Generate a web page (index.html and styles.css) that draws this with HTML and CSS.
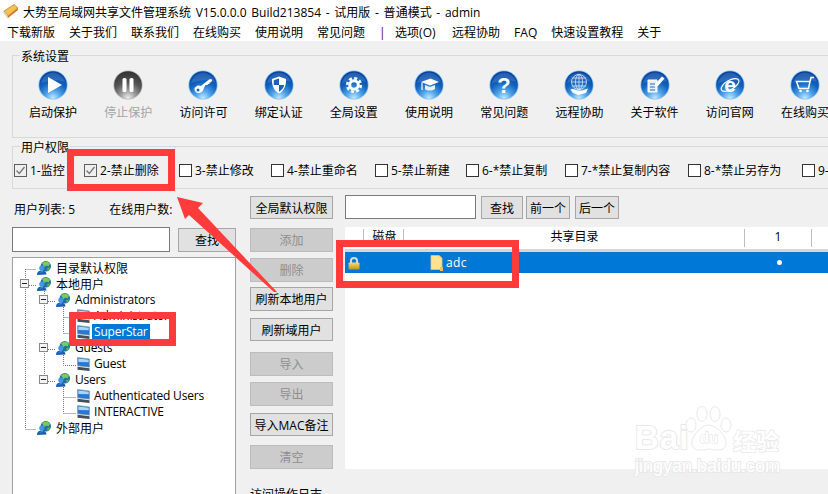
FILE: index.html
```html
<!DOCTYPE html>
<html lang="zh-CN">
<head>
<meta charset="utf-8">
<title>大势至局域网共享文件管理系统</title>
<link rel="stylesheet" href="styles.css">
</head>
<body>
<svg class="defs" width="0" height="0" aria-hidden="true">
  <defs>
    <radialGradient id="blue" cx=".5" cy=".98" r=".95">
      <stop offset="0" stop-color="#c4eaff"/><stop offset=".3" stop-color="#4fa3e8"/><stop offset=".62" stop-color="#1262bd"/><stop offset="1" stop-color="#05409c"/>
    </radialGradient>
    <radialGradient id="grey" cx=".5" cy=".98" r=".95">
      <stop offset="0" stop-color="#f0f0f0"/><stop offset=".3" stop-color="#9c9c9c"/><stop offset=".62" stop-color="#555"/><stop offset="1" stop-color="#333"/>
    </radialGradient>
    <linearGradient id="lock" x1="0" y1="0" x2="0" y2="1"><stop offset="0" stop-color="#f7dc6a"/><stop offset="1" stop-color="#c8960f"/></linearGradient>
    <symbol id="ball" viewBox="0 0 30 30">
      <circle cx="15" cy="15" r="14.6" fill="#7cc0f2"/>
      <circle cx="15" cy="15" r="13.8" fill="url(#blue)"/>
      <path d="M3 13C5 6 10 2.500 15 2.500S26 7 27 12C20 9 10 10 3 13Z" fill="#fff" opacity=".13"/>
    </symbol>
    <symbol id="ballg" viewBox="0 0 30 30">
      <circle cx="15" cy="15" r="14.6" fill="#b5b5b5"/>
      <circle cx="15" cy="15" r="13.8" fill="url(#grey)"/>
    </symbol>
    <symbol id="net" viewBox="0 0 14 14">
      <circle cx="8.800" cy="5.200" r="5.200" fill="#1f6fa8"/>
      <path d="M5 2.500C7 .2 11 .2 13 2.800L11.500 5.500L9.500 4.500L7.500 6Z" fill="#7cc95a"/>
      <path d="M10 7L13 6.500C13 8.500 11.500 9.800 10.500 10Z" fill="#5fb04a"/>
      <circle cx="4.800" cy="7" r="2.600" fill="#3f97e8"/>
      <path d="M0 14C0 10.500 2.300 9.500 4.800 9.500S9.500 10.800 9.500 13.500Z" fill="#1a5cb4"/>
      <path d="M2 11.500L5 10.300L6.500 11Z" fill="#6db6f0"/>
    </symbol>
    <symbol id="pc" viewBox="0 0 13 14">
      <path d="M.5 .5L12.500 2V10.200L.5 8.800Z" fill="#2579d2" stroke="#8b9cb0" stroke-width=".7"/>
      <path d="M1.400 1.500L11.700 2.800V5.300L1.400 5Z" fill="#a9d6f6"/>
      <path d="M.5 9.800L12.500 11.200V14L.5 12.800Z" fill="#454f5c"/>
    </symbol>
  </defs>
</svg>

<div class="app">
  <header class="titlebar">
    <svg class="app-ic" viewBox="0 0 16 16"><path d="M1 8L11 1.500L15 5L5 13Z" fill="#f4c04e" stroke="#b87a1f" stroke-width=".7"/><path d="M1 8L5 13V15L1 10Z" fill="#e8e4d8" stroke="#b8a27a" stroke-width=".5"/><path d="M5 13L15 5V7L5 15Z" fill="#d96f2a"/></svg>
    <span class="title-text">大势至局域网共享文件管理系统 V15.0.0.0 Build213854 - 试用版 - 普通模式 - admin</span>
  </header>
  <nav class="menu">
    <span>下载新版</span><span>关于我们</span><span>联系我们</span><span>在线购买</span><span>使用说明</span><span>常见问题</span><span class="menu-sep">|</span><span class="menu-opt">选项(O)</span><span>远程协助</span><span>FAQ</span><span>快速设置教程</span><span>关于</span>
  </nav>

  <main class="content">
    <fieldset class="group group-sys">
      <legend>系统设置</legend>
      <div class="tools">
        <div class="tool"><svg class="tool-ic" viewBox="0 0 30 30"><use href="#ball"/><path d="M10 7L24 15L10 23Z" fill="#fff"/></svg><span>启动保护</span></div>
        <div class="tool tool-off"><svg class="tool-ic" viewBox="0 0 30 30"><use href="#ballg"/><rect x="9.500" y="8" width="4" height="14" rx="1.500" fill="#fff"/><rect x="16.500" y="8" width="4" height="14" rx="1.500" fill="#fff"/></svg><span>停止保护</span></div>
        <div class="tool"><svg class="tool-ic" viewBox="0 0 30 30"><use href="#ball"/><path d="M7 17.500C9 15 11.500 15 13 16L21 9.500L23.500 9L24 11L22.500 12.500L21.500 12.500V14H20L19.500 15H17.500L15.500 19C15.500 22 11 24 8.500 22.500C6.500 21 6 19 7 17.500Z" fill="#fff"/><circle cx="10" cy="20" r="1.500" fill="#1a66be"/></svg><span>访问许可</span></div>
        <div class="tool"><svg class="tool-ic" viewBox="0 0 30 30"><use href="#ball"/><path d="M15 6.500L22 9C22.500 15 20 21 15 23.500C10 21 7.500 15 8 9Z" fill="#fff"/><path d="M15 8.500V15H9.800C9.700 13 9.700 11.500 9.800 10.200ZM15 15H20.200C19.500 18 17.500 20.500 15 21.800Z" fill="#1a62b8"/></svg><span>绑定认证</span></div>
        <div class="tool"><svg class="tool-ic" viewBox="0 0 30 30"><use href="#ball"/><circle cx="15" cy="15" r="6.800" fill="none" stroke="#fff" stroke-width="2.600" stroke-dasharray="3 2.340"/><circle cx="15" cy="15" r="4.300" fill="none" stroke="#fff" stroke-width="3"/></svg><span>全局设置</span></div>
        <div class="tool"><svg class="tool-ic" viewBox="0 0 30 30"><use href="#ball"/><path d="M7 12L16.500 8.500L25 12L16 15.500Z" fill="#fff"/><path d="M11 15L16 17L21 15V19C18 21 13 21 11 19Z" fill="#e8f2fb"/><path d="M8 12.500V20" stroke="#fff" stroke-width="1.200"/></svg><span>使用说明</span></div>
        <div class="tool"><svg class="tool-ic" viewBox="0 0 30 30"><use href="#ball"/><text class="q" x="15" y="22.500" text-anchor="middle">?</text></svg><span>常见问题</span></div>
        <div class="tool"><svg class="tool-ic" viewBox="0 0 30 30"><use href="#ball"/><g fill="none" stroke="#dbe9f6" stroke-width=".8"><circle cx="15" cy="12" r="7.500"/><ellipse cx="15" cy="12" rx="3.500" ry="7.500"/><path d="M7.500 12H22.500M8.500 8H21.500M8.500 16H21.500M15 4.500V19.500"/></g><path d="M6.500 19.500C9 18 12 20 14 20.500H18L24 18.500L22 23L14 25L8.500 22.500Z" fill="#fff"/></svg><span>远程协助</span></div>
        <div class="tool"><svg class="tool-ic" viewBox="0 0 30 30"><use href="#ball"/><path d="M8 10H17V22H8Z" fill="#e6eef7" stroke="#fff"/><path d="M10 14H15M10 17H15M10 20H15" stroke="#2269bc"/><path d="M15 14L22 6.500L24.500 8.500L18 16L14.500 17Z" fill="#fff"/></svg><span>关于软件</span></div>
        <div class="tool"><svg class="tool-ic" viewBox="0 0 30 30"><use href="#ball"/><text class="e" x="15" y="22" text-anchor="middle">e</text><ellipse cx="15" cy="15" rx="10" ry="4.500" transform="rotate(-30 15 15)" fill="none" stroke="#fff" stroke-width="1.200"/></svg><span>访问官网</span></div>
        <div class="tool"><svg class="tool-ic" viewBox="0 0 30 30"><use href="#ball"/><path d="M6.500 11.500H20L18.500 18.500H9ZM20 11.500L21 7.500H24" fill="none" stroke="#fff" stroke-width="1.500"/><circle cx="10.500" cy="21" r="1.300" fill="#fff"/><circle cx="17.500" cy="21" r="1.300" fill="#fff"/></svg><span>在线购买</span></div>
      </div>
    </fieldset>

    <fieldset class="group group-perm">
      <legend>用户权限</legend>
      <div class="perms">
        <label class="perm"><span class="check is-on"><svg viewBox="0 0 11 11"><path d="M1.500 5.500L4.300 8.500L9.500 2" fill="none" stroke="#777" stroke-width="1.300"/></svg></span><span class="perm-text">1-监控</span></label>
        <label class="perm"><span class="check is-on"><svg viewBox="0 0 11 11"><path d="M1.500 5.500L4.300 8.500L9.500 2" fill="none" stroke="#777" stroke-width="1.300"/></svg></span><span class="perm-text">2-禁止删除</span></label>
        <label class="perm"><span class="check"></span><span class="perm-text">3-禁止修改</span></label>
        <label class="perm"><span class="check"></span><span class="perm-text">4-禁止重命名</span></label>
        <label class="perm"><span class="check"></span><span class="perm-text">5-禁止新建</span></label>
        <label class="perm"><span class="check"></span><span class="perm-text">6-*禁止复制</span></label>
        <label class="perm"><span class="check"></span><span class="perm-text">7-*禁止复制内容</span></label>
        <label class="perm"><span class="check"></span><span class="perm-text">8-*禁止另存为</span></label>
        <label class="perm"><span class="check"></span><span class="perm-text">9-*禁止打印</span></label>
      </div>
    </fieldset>

    <div class="lower">
      <section class="col-left">
        <div class="stats"><span>用户列表: 5</span><span>在线用户数:</span></div>
        <div class="find"><div class="input input-user"></div><button class="btn btn-find">查找</button></div>
        <div class="tree">
          <svg class="tree-lines" viewBox="0 0 224 240" width="224" height="240">
            <g fill="none" stroke="#777" stroke-dasharray="1 1">
              <path d="M12.500 11V171M12.500 11.500H23M16 27.500H23M12.500 171.500H23"/>
              <path d="M31.500 31V123M35 43.500H42M35 91.500H42M35 123.500H42"/>
              <path d="M50.500 47V75.500M50.500 59.500H63M50.500 75.500H63M50.500 95V107.500H63M50.500 127V155.500M50.500 139.500H63M50.500 155.500H63"/>
            </g>
          </svg>
          <div class="node n1"><svg class="ic-net"><use href="#net"/></svg><span>目录默认权限</span></div>
          <div class="node n1"><i class="exp e1"></i><svg class="ic-net"><use href="#net"/></svg><span>本地用户</span></div>
          <div class="node n2"><i class="exp e2"></i><svg class="ic-net"><use href="#net"/></svg><span>Administrators</span></div>
          <div class="node n3"><svg class="ic-pc"><use href="#pc"/></svg><span>Administrator</span></div>
          <div class="node n3"><svg class="ic-pc"><use href="#pc"/></svg><span class="sel">SuperStar</span></div>
          <div class="node n2"><i class="exp e2"></i><svg class="ic-net"><use href="#net"/></svg><span>Guests</span></div>
          <div class="node n3"><svg class="ic-pc"><use href="#pc"/></svg><span>Guest</span></div>
          <div class="node n2"><i class="exp e2"></i><svg class="ic-net"><use href="#net"/></svg><span>Users</span></div>
          <div class="node n3"><svg class="ic-pc"><use href="#pc"/></svg><span>Authenticated Users</span></div>
          <div class="node n3"><svg class="ic-pc"><use href="#pc"/></svg><span>INTERACTIVE</span></div>
          <div class="node n1"><svg class="ic-net"><use href="#net"/></svg><span>外部用户</span></div>
        </div>
      </section>

      <section class="col-mid">
        <button class="btn h23 after9">全局默认权限</button>
        <button class="btn h24 after6" disabled>添加</button>
        <button class="btn h24 after5" disabled>删除</button>
        <button class="btn h24 after7">刷新本地用户</button>
        <button class="btn h23 after11">刷新域用户</button>
        <button class="btn h24 after6" disabled>导入</button>
        <button class="btn h24 after7" disabled>导出</button>
        <button class="btn h23 after9">导入MAC备注</button>
        <button class="btn h24 after18" disabled>清空</button>
        <div class="log-title">访问操作日志</div>
      </section>

      <section class="col-right">
        <div class="search">
          <div class="input input-dir"></div>
          <button class="btn h23 w42">查找</button>
          <button class="btn h23 w44">前一个</button>
          <button class="btn h23 w44 next">后一个</button>
        </div>
        <div class="list">
          <div class="list-head">
            <span class="hc hc-a"></span><span class="hc hc-b">磁盘</span><span class="hc hc-c">共享目录</span><span class="hc hc-d">1</span><span class="hc hc-e"></span>
          </div>
          <div class="list-row">
            <span class="cell-lock"><svg class="ic-lock" viewBox="0 0 12 14"><path d="M3 7V4.500C3 1 9 1 9 4.500V7" fill="none" stroke="#d9d9d9" stroke-width="2"/><rect x=".5" y="6.500" width="11" height="7" rx="1" fill="url(#lock)"/></svg></span>
            <span class="cell-name"><svg class="ic-folder" viewBox="0 0 13 16"><path d="M1 .5H9L12 3V14.500H1Z" fill="#fde28f" stroke="#e8c468" stroke-width=".8"/><path d="M10 12H13V16H10Z" fill="#e9c25a"/></svg>adc</span>
            <span class="cell-dot"><i class="dot"></i></span>
          </div>
        </div>
      </section>
    </div>
  </main>

  <div class="mark mark-perm"></div>
  <div class="mark mark-row"></div>
  <div class="mark mark-user"></div>
  <svg class="arrow" viewBox="0 0 110 105" width="110" height="105"><polygon points="2,2 28,8 23,13 102,97 99,97 14,20 10,24" fill="#ff3b3b"/></svg>

  <div class="watermark">
    <div class="wm-top">
      <span class="wm-bai">Bai</span>
      <svg class="wm-paw" viewBox="0 0 48 50" width="48" height="50"><g fill="#fff" stroke="#e9e9e9"><ellipse cx="6" cy="20" rx="5" ry="7"/><ellipse cx="17" cy="9" rx="5" ry="7.500"/><ellipse cx="30" cy="9" rx="5" ry="7.500"/><ellipse cx="41" cy="20" rx="5" ry="7"/><path d="M24 20C32 20 43 33 41 40C39 47 30 45 24 44C18 45 9 47 7 40C5 33 16 20 24 20Z"/></g><text class="wm-du" x="24" y="38" text-anchor="middle">du</text></svg>
      <span class="wm-cn">经验</span>
    </div>
    <div class="wm-url">jingyan.baidu.com</div>
  </div>
</div>
</body>
</html>
```
FILE: styles.css
```css
* { box-sizing: border-box; }
html, body { margin: 0; padding: 0; height: 494px; overflow: hidden; }
body { background: #f0f0f0; color: #000; font: 12px/16px "Open Sans", "Noto Sans CJK SC", sans-serif; }
.defs { position: absolute; }
.app { position: relative; width: 828px; height: 494px; overflow: hidden; }

.titlebar { height: 22px; background: #fff; display: flex; align-items: center; padding-left: 3px; gap: 4px; white-space: nowrap; }
.title-text { word-spacing: 1.600px; padding-top: 3px; }
.app-ic { width: 16px; height: 16px; flex: none; }
.menu { height: 19px; background: #fff; display: flex; gap: 14px; padding: 2px 0 0 7px; align-items: center; white-space: nowrap; }
.menu-sep { color: #500050; width: 2px; }
.menu-opt { width: 43px; }

.content { padding: 5px 0 0 12px; }
.group { margin: 0 -40px 0 0; padding: 0; border: 1px solid #d9d9d9; min-width: 0; }
.group legend { margin-left: 7px; padding: 3px 1px 0; line-height: 16px; }
.group-sys { height: 92px; }
.group-perm { height: 52px; margin-top: -1px; }

.tools { display: grid; grid-template-columns: repeat(11, 75.2px); padding: 5px 0 0 2.500px; }
.tool { display: flex; flex-direction: column; align-items: center; gap: 5px; white-space: nowrap; }
.tool-ic { width: 30px; height: 30px; display: block; }
.tool-off { color: #a5a5a5; }
.q { font: 900 22px "Liberation Sans", sans-serif; fill: #fff; }
.e { font: 700 21px "Liberation Sans", sans-serif; fill: #fff; }

.perms { display: grid; grid-template-columns: 70px 95px 92px 104px 91px 99px 123px 114px 80px; padding: 6px 0 0 1px; }
.perm { display: flex; align-items: center; gap: 3px; white-space: nowrap; height: 16px; }
.perm-text { height: 16px; padding-top: 1px; }
.check { width: 13px; height: 13px; flex: none; background: #fff; border: 1px solid #333; }
.check svg { display: block; width: 11px; height: 11px; }
.check.is-on { border-color: #5e5e5e; background: #f0f0f0; }

.lower { display: flex; margin-top: 6px; }
.col-left { width: 224px; flex: none; }
.stats { display: flex; height: 32px; padding: 7px 0 0 2px; gap: 34px; }
.find { display: flex; justify-content: space-between; height: 25px; margin-bottom: 5px; }
.input { background: #fff; border: 1px solid #7a7a7a; }
.input-user { width: 158px; height: 25px; }
.btn-find { width: 58px; height: 24px; margin-top: 1px; }
.tree { position: relative; height: 260px; background: #fff; border: 1px solid #a0a0a0; padding-top: 2px; }
.tree-lines { position: absolute; left: 0; top: 0; }
.node { position: relative; height: 16px; display: flex; align-items: center; white-space: nowrap; letter-spacing: -.2px; }
.n1 { padding-left: 24px; letter-spacing: 0; }
.n2 { padding-left: 43px; }
.n3 { padding-left: 64px; }
.ic-net { width: 14px; height: 14px; margin-right: 5px; flex: none; }
.ic-pc { width: 13px; height: 14px; margin-right: 2px; flex: none; }
.node span { padding: 0 2px; }
.n1 span { padding: 1px 0 0; height: 16px; }
.n2 span { padding: 0; }
.sel { background: #0078d7; color: #fff; height: 16px; }
.exp { position: absolute; top: 3px; width: 9px; height: 9px; background: #f4f4f4; border: 1px solid #888; }
.exp::after { content: ""; position: absolute; left: 1px; right: 1px; top: 3px; height: 1px; background: #222; }
.e1 { left: 7px; }
.e2 { left: 26px; }

.col-mid { width: 83px; flex: none; margin-left: 14px; padding-top: 1px; display: flex; flex-direction: column; }
.btn { display: block; padding: 2px 0 0; font: inherit; color: #000; background: #e1e1e1; border: 1px solid #a6a6a6; white-space: nowrap; flex: none; }
.btn:disabled { background: #cccccc; border-color: #bcbcbc; color: #8f8f8f; }
.h23 { height: 23px; }
.h24 { height: 24px; }
.after5 { margin-bottom: 5px; }
.after6 { margin-bottom: 6px; }
.after7 { margin-bottom: 7px; }
.after9 { margin-bottom: 9px; }
.after11 { margin-bottom: 11px; }
.after18 { margin-bottom: 18px; }
.log-title { white-space: nowrap; }

.col-right { margin-left: 12px; width: 483px; flex: none; }
.search { display: flex; align-items: flex-end; height: 24px; gap: 3px; }
.input-dir { width: 131px; height: 24px; margin-right: 2px; }
.w42 { width: 42px; }
.w44 { width: 44px; }
.next { margin-left: 2px; }
.list { margin-top: 8px; height: 242px; background: #fff; }
.list-head { display: grid; grid-template-columns: 19px 40px 341px 67px 16px; height: 25px; padding-top: 2px; border-bottom: 3px solid #d6d6d6; }
.hc { height: 18px; border-right: 1px solid #bdbdbd; text-align: center; line-height: 14px; padding-top: 1px; }
.hc-b { padding-left: 2px; }
.hc-c { padding-left: 1px; }
.hc-e { border-right: 0; }
.list-row { display: grid; grid-template-columns: 59px 341px 67px; height: 21px; background: #0078d7; color: #fff; align-items: center; }
.cell-lock { padding-left: 3px; display: flex; }
.ic-lock { width: 12px; height: 14px; }
.cell-name { display: flex; align-items: center; gap: 3px; padding-left: 26px; letter-spacing: .4px; }
.ic-folder { width: 13px; height: 16px; }
.cell-dot { display: flex; justify-content: center; }
.dot { width: 5px; height: 5px; border-radius: 50%; background: #fff; margin-left: 2px; }

.mark { position: absolute; border: 7px solid #ff3b3b; }
.mark-perm { left: 67px; top: 149px; width: 108px; height: 42px; }
.mark-row { left: 336px; top: 240px; width: 183px; height: 48px; }
.mark-user { left: 69px; top: 312px; width: 107px; height: 34px; }
.arrow { position: absolute; left: 175px; top: 195px; }

.watermark { position: absolute; left: 635px; top: 405px; width: 150px; color: #fff; font-family: "Liberation Sans", sans-serif; -webkit-text-stroke: 2px #e9e9e9; }
.wm-top { display: flex; align-items: flex-end; height: 50px; }
.wm-bai { font-size: 33px; line-height: 34px; font-weight: 700; width: 52px; letter-spacing: 1px; paint-order: stroke fill; }
.wm-paw { flex: none; margin-left: -2px; }
.wm-du { font: 700 15px "Liberation Sans", sans-serif; fill: #fff; stroke: #ddd; stroke-width: 1px; paint-order: stroke fill; }
.wm-cn { font: 700 23px/30px "Noto Sans CJK SC", sans-serif; white-space: nowrap; paint-order: stroke fill; -webkit-text-stroke: 1.500px #e9e9e9; }
.wm-url { font-size: 18px; line-height: 20px; margin-top: 1px; white-space: nowrap; paint-order: stroke fill; }
```
